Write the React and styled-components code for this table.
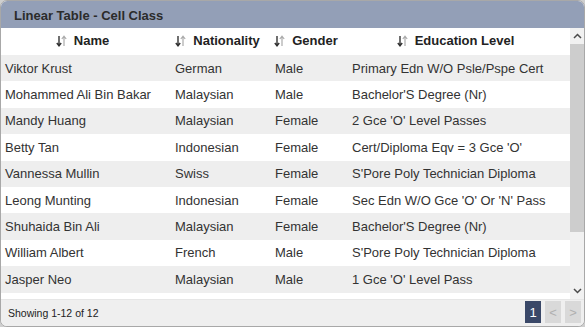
import React from "react";
import styled, { createGlobalStyle } from "styled-components";

const Global = createGlobalStyle`
  html, body { margin: 0; padding: 0; background: #cfcfcf; }
  body { font-family: "Liberation Sans", Arial, sans-serif; }
`;

const Panel = styled.div`
  width: 585px;
  height: 327px;
  box-sizing: border-box;
  border: 1px solid #a8a8a8;
  border-radius: 7px;
  overflow: hidden;
  display: flex;
  flex-direction: column;
  background: #fff;
`;

const TitleBar = styled.div`
  height: 27px;
  flex: none;
  box-sizing: border-box;
  padding: 1px 0 0 13px;
  background: #939fb7;
  color: #2b2b2b;
  font-weight: bold;
  font-size: 13px;
  line-height: 27px;
`;

const Body = styled.div`
  flex: 1;
  min-height: 0;
  display: flex;
  background: #fff;
`;

const Viewport = styled.div`
  flex: 1;
  min-width: 0;
  overflow: hidden;
`;

const Table = styled.table`
  width: 100%;
  table-layout: fixed;
  border-collapse: collapse;
  font-size: 13px;
  color: #333;
`;

const HeadCell = styled.th`
  background: #fff;
  height: 27px;
  padding: 0 4px;
  font-weight: bold;
  font-size: 13px;
  color: #222;
  text-align: center;
  white-space: nowrap;
`;

const HeadInner = styled.span`
  display: inline-flex;
  align-items: center;
  gap: 7px;
  margin-left: -7px;
`;

const Row = styled.tr`
  background: ${(p) => (p.$odd ? "#eeeeee" : "#ffffff")};
`;

const Cell = styled.td`
  height: 26.4px;
  padding: 0 4px;
  white-space: nowrap;
  overflow: hidden;
`;

const ScrollBar = styled.div`
  width: 14px;
  flex: none;
  display: flex;
  flex-direction: column;
  background: #f1f1f1;
`;

const ScrollButton = styled.div`
  height: 16px;
  flex: none;
  display: flex;
  align-items: center;
  justify-content: center;
  background: #f1f1f1;
`;

const Track = styled.div`
  flex: 1;
  display: flex;
  flex-direction: column;
`;

const Thumb = styled.div`
  height: 188px;
  background: #cdcdcd;
`;

const Footer = styled.div`
  height: 26px;
  flex: none;
  background: #efefef;
  border-top: 1px solid #e6e6e6;
  display: flex;
  align-items: center;
  justify-content: space-between;
  padding: 0 3px 0 7px;
`;

const Info = styled.span`
  font-size: 10.5px;
  color: #222;
`;

const Pager = styled.div`
  display: flex;
  gap: 4px;
  align-items: center;
  margin-top: -2px;
`;

const PageBtn = styled.div`
  width: 16px;
  height: 22px;
  display: flex;
  align-items: center;
  justify-content: center;
  font-size: 13px;
  background: ${(p) => (p.$active ? "#3a4868" : "#d9d9d9")};
  color: ${(p) => (p.$active ? "#ffffff" : "#b0b0b0")};
`;

const SortIcon = () => (
  <svg width="11" height="12" viewBox="0 0 11 12">
    <path d="M3 1 V10.5 M0.8 8 L3 10.8 L5.2 8" stroke="#333" strokeWidth="1.4" fill="none" />
    <path d="M8 11 V1.5 M5.8 4 L8 1.2 L10.2 4" stroke="#aaa" strokeWidth="1.2" fill="none" />
  </svg>
);

const Chevron = ({ up }) => (
  <svg width="9" height="6" viewBox="0 0 9 6">
    <path
      d={up ? "M1 5 L4.5 1.5 L8 5" : "M1 1 L4.5 4.5 L8 1"}
      stroke="#4a4a4a"
      strokeWidth="1.5"
      fill="none"
    />
  </svg>
);

const columns = [
  { key: "name", label: "Name", width: 170 },
  { key: "nat", label: "Nationality", width: 100 },
  { key: "gender", label: "Gender", width: 77 },
  { key: "edu", label: "Education Level" },
];

const rows = [
  ["Viktor Krust", "German", "Male", "Primary Edn W/O Psle/Pspe Cert"],
  ["Mohammed Ali Bin Bakar", "Malaysian", "Male", "Bachelor'S Degree (Nr)"],
  ["Mandy Huang", "Malaysian", "Female", "2 Gce 'O' Level Passes"],
  ["Betty Tan", "Indonesian", "Female", "Cert/Diploma Eqv = 3 Gce 'O'"],
  ["Vannessa Mullin", "Swiss", "Female", "S'Pore Poly Technician Diploma"],
  ["Leong Munting", "Indonesian", "Female", "Sec Edn W/O Gce 'O' Or 'N' Pass"],
  ["Shuhaida Bin Ali", "Malaysian", "Female", "Bachelor'S Degree (Nr)"],
  ["William Albert", "French", "Male", "S'Pore Poly Technician Diploma"],
  ["Jasper Neo", "Malaysian", "Male", "1 Gce 'O' Level Pass"],
  ["Karen Lim", "Singaporean", "Female", "Diploma (Nr)"],
  ["Ahmad Bin Yusof", "Malaysian", "Male", "Gce 'A' Level Passes"],
  ["Grace Ong", "Singaporean", "Female", "Master'S Degree"],
];

export default function App() {
  return (
    <>
      <Global />
      <Panel>
        <TitleBar>Linear Table - Cell Class</TitleBar>
        <Body>
          <Viewport>
            <Table>
              <colgroup>
                {columns.map((c) => (
                  <col key={c.key} style={c.width ? { width: c.width } : undefined} />
                ))}
              </colgroup>
              <thead>
                <tr>
                  {columns.map((c) => (
                    <HeadCell key={c.key}>
                      <HeadInner>
                        <SortIcon />
                        {c.label}
                      </HeadInner>
                    </HeadCell>
                  ))}
                </tr>
              </thead>
              <tbody>
                {rows.map((r, i) => (
                  <Row key={i} $odd={i % 2 === 0}>
                    {r.map((v, j) => (
                      <Cell key={j}>{v}</Cell>
                    ))}
                  </Row>
                ))}
              </tbody>
            </Table>
          </Viewport>
          <ScrollBar>
            <ScrollButton>
              <Chevron up />
            </ScrollButton>
            <Track>
              <Thumb />
            </Track>
            <ScrollButton>
              <Chevron />
            </ScrollButton>
          </ScrollBar>
        </Body>
        <Footer>
          <Info>Showing 1-12 of 12</Info>
          <Pager>
            <PageBtn $active>1</PageBtn>
            <PageBtn>&lt;</PageBtn>
            <PageBtn>&gt;</PageBtn>
          </Pager>
        </Footer>
      </Panel>
    </>
  );
}
